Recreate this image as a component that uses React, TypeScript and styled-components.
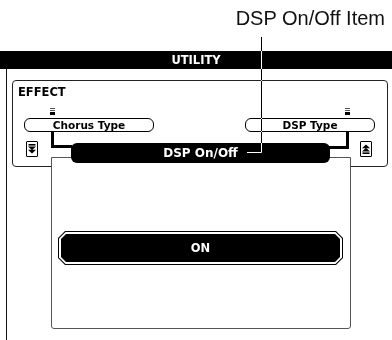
import React from 'react'
import styled, { createGlobalStyle } from 'styled-components'

const GlobalStyle = createGlobalStyle`
  html, body {
    margin: 0;
    padding: 0;
    background: #fff;
  }
  body {
    font-family: "Liberation Sans", Arial, sans-serif;
  }
`

const lcdFont = `"DejaVu Sans", "Liberation Sans", sans-serif`

const Stage = styled.div`
  position: relative;
  width: 392px;
  height: 340px;
  overflow: hidden;
  background: #fff;
`

const Caption = styled.div`
  height: 51px;
  box-sizing: border-box;
  padding: 7px 7px 0 0;
  text-align: right;
  font-size: 20px;
  line-height: 23px;
  color: #111;
`

const TitleBar = styled.div`
  height: 18px;
  background: #000;
  color: #fff;
  font-family: ${lcdFont};
  font-weight: bold;
  font-size: 11.5px;
  line-height: 18px;
  text-align: center;
`

const Screen = styled.div`
  position: relative;
  height: 271px;
  margin-left: 6px;
  box-sizing: border-box;
  border-left: 1px solid #111;
  padding: 11px 0 0 5px;
`

const Panel = styled.div`
  width: 376px;
  height: 87px;
  box-sizing: border-box;
  border: 1px solid #222;
  border-radius: 4px;
  padding: 5px 12px 0 5px;
`

const PanelLabel = styled.div`
  font-family: ${lcdFont};
  font-weight: bold;
  font-size: 11.5px;
  line-height: 13px;
  color: #000;
`

const SelectRow = styled.div`
  display: flex;
  justify-content: space-between;
  margin: 9px 0 0 6px;
`

const SelectGroup = styled.div<{ $side: 'left' | 'right' }>`
  display: flex;
  flex-direction: column;
  align-items: ${(p) => (p.$side === 'left' ? 'flex-start' : 'flex-end')};
  width: 130px;
  & > svg {
    margin: ${(p) => (p.$side === 'left' ? '0 0 0 26px' : '0 25px 0 0')};
  }
`

const SelectBox = styled.div`
  width: 130px;
  height: 14px;
  margin-top: 3px;
  box-sizing: border-box;
  border: 1px solid #000;
  border-radius: 6px;
  font-family: ${lcdFont};
  font-weight: bold;
  font-size: 10.5px;
  line-height: 12px;
  text-align: center;
  color: #000;
`

const ButtonRow = styled.div`
  display: flex;
  justify-content: space-between;
  margin: 9px 3px 0 8px;
`

const ScrollButton = styled.div`
  width: 12px;
  height: 16px;
  box-sizing: border-box;
  border: 1px solid #000;
  border-radius: 1px;
  display: flex;
  align-items: center;
  justify-content: center;
`

const Popup = styled.div`
  position: absolute;
  left: 44px;
  top: 88px;
  width: 300px;
  height: 172px;
  box-sizing: border-box;
  border: 1px solid #555;
  border-radius: 0 0 3px 3px;
  background: #fff;
`

const PopupTitle = styled.div`
  width: 259px;
  height: 20px;
  margin: -15px 0 0 19px;
  border-radius: 6px;
  background: #000;
  color: #fff;
  font-family: ${lcdFont};
  font-weight: bold;
  font-size: 12px;
  line-height: 20px;
  text-align: center;
`

const octagon = (c: number) =>
  `polygon(${c}px 0, calc(100% - ${c}px) 0, 100% ${c}px, 100% calc(100% - ${c}px), calc(100% - ${c}px) 100%, ${c}px 100%, 0 calc(100% - ${c}px), 0 ${c}px)`

const ValueOuter = styled.div`
  width: 285px;
  height: 34px;
  margin: 68px 0 0 6px;
  box-sizing: border-box;
  padding: 1px;
  background: #000;
  clip-path: ${octagon(7)};
`

const ValueGap = styled.div`
  height: 100%;
  box-sizing: border-box;
  padding: 2px;
  background: #fff;
  clip-path: ${octagon(6.5)};
`

const ValueInner = styled.div`
  height: 100%;
  background: #000;
  clip-path: ${octagon(5)};
  color: #fff;
  font-family: ${lcdFont};
  font-weight: bold;
  font-size: 11.5px;
  line-height: 28px;
  text-align: center;
`

const Overlay = styled.svg<{ $invert?: boolean }>`
  position: absolute;
  left: 0;
  top: 0;
  pointer-events: none;
  ${(p) => p.$invert && 'mix-blend-mode: difference;'}
`

const Indicator = () => (
  <svg width="5" height="7" viewBox="0 0 5 7">
    <rect x="0" y="0" width="5" height="1" fill="#555" />
    <rect x="0" y="2" width="5" height="1" fill="#555" />
    <rect x="0" y="4" width="5" height="3" fill="#000" />
  </svg>
)

const DownIcon = () => (
  <svg width="8" height="10" viewBox="0 0 8 10">
    <rect x="0.5" y="0" width="7" height="1.6" fill="#000" />
    <polygon points="0,2.6 8,2.6 4,6.2" fill="#000" />
    <polygon points="0,5.8 8,5.8 4,9.6" fill="#000" />
  </svg>
)

const UpIcon = () => (
  <svg width="8" height="10" viewBox="0 0 8 10">
    <polygon points="0,4.2 8,4.2 4,0.4" fill="#000" />
    <polygon points="0,7.4 8,7.4 4,3.8" fill="#000" />
    <rect x="0.5" y="8.4" width="7" height="1.6" fill="#000" />
  </svg>
)

export default function App() {
  return (
    <>
      <GlobalStyle />
      <Stage>
        <Caption>DSP On/Off Item</Caption>
        <TitleBar>UTILITY</TitleBar>
        <Screen>
          <Panel>
            <PanelLabel>EFFECT</PanelLabel>
            <SelectRow>
              <SelectGroup $side="left">
                <Indicator />
                <SelectBox>Chorus Type</SelectBox>
              </SelectGroup>
              <SelectGroup $side="right">
                <Indicator />
                <SelectBox>DSP Type</SelectBox>
              </SelectGroup>
            </SelectRow>
            <ButtonRow>
              <ScrollButton>
                <DownIcon />
              </ScrollButton>
              <ScrollButton>
                <UpIcon />
              </ScrollButton>
            </ButtonRow>
          </Panel>
          <Popup>
            <PopupTitle>DSP On/Off</PopupTitle>
            <ValueOuter>
              <ValueGap>
                <ValueInner>ON</ValueInner>
              </ValueGap>
            </ValueOuter>
          </Popup>
        </Screen>

        {/* connectors from the two selectors into the popup title */}
        <Overlay width="392" height="340">
          <path d="M52.5 131 V146.5 H72" stroke="#000" strokeWidth="3" fill="none" />
          <path d="M347.5 131 V147.5 H329" stroke="#000" strokeWidth="3" fill="none" />
        </Overlay>

        {/* leader line of the caption, inverted over black areas */}
        <Overlay $invert width="392" height="340">
          <path d="M261.5 37 V152.5 H247" stroke="#fff" strokeWidth="1" fill="none" />
        </Overlay>
      </Stage>
    </>
  )
}
